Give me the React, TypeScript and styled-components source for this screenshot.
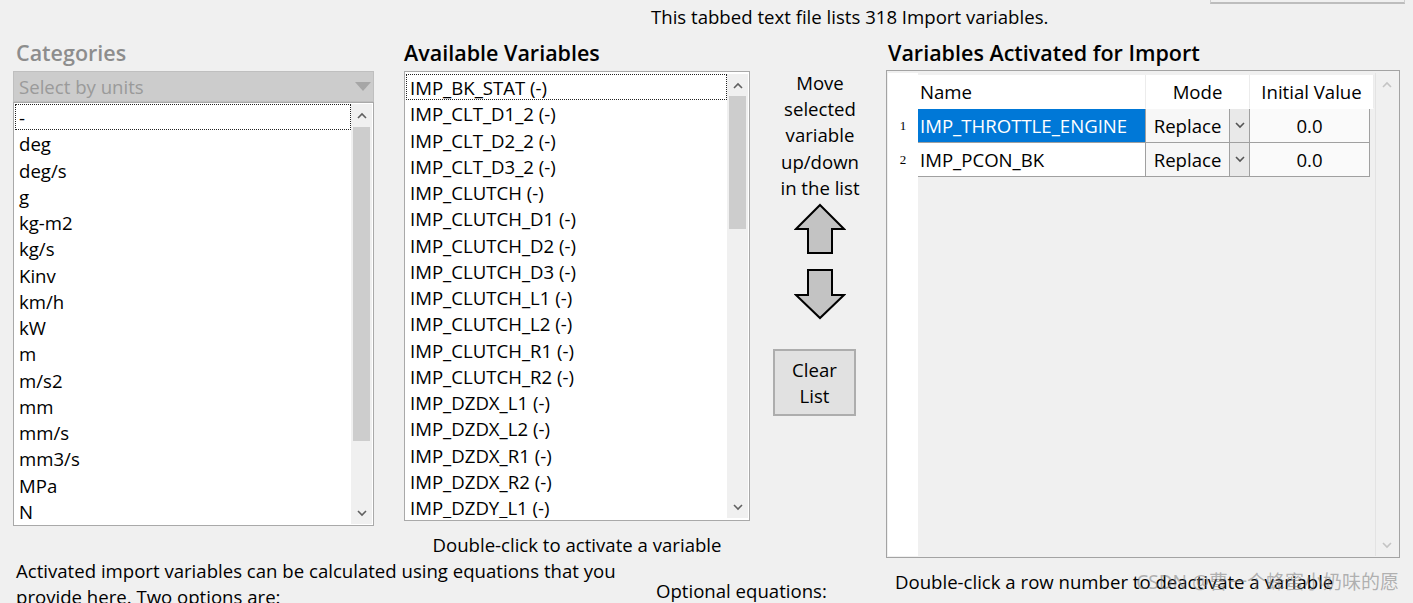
import React from "react";
import styled, { createGlobalStyle } from "styled-components";

const GlobalStyle = createGlobalStyle`
  html, body {
    margin: 0;
    padding: 0;
    background: #f0f0f0;
  }
  body {
    font-family: "Open Sans", "Noto Sans", "Noto Sans CJK SC", sans-serif;
    font-size: 18.6px;
    color: #000;
    overflow: hidden;
  }
`;

const categories = [
  "-", "deg", "deg/s", "g", "kg-m2", "kg/s", "Kinv", "km/h",
  "kW", "m", "m/s2", "mm", "mm/s", "mm3/s", "MPa", "N",
];

const variables = [
  "IMP_BK_STAT (-)", "IMP_CLT_D1_2 (-)", "IMP_CLT_D2_2 (-)", "IMP_CLT_D3_2 (-)",
  "IMP_CLUTCH (-)", "IMP_CLUTCH_D1 (-)", "IMP_CLUTCH_D2 (-)", "IMP_CLUTCH_D3 (-)",
  "IMP_CLUTCH_L1 (-)", "IMP_CLUTCH_L2 (-)", "IMP_CLUTCH_R1 (-)", "IMP_CLUTCH_R2 (-)",
  "IMP_DZDX_L1 (-)", "IMP_DZDX_L2 (-)", "IMP_DZDX_R1 (-)", "IMP_DZDX_R2 (-)",
  "IMP_DZDY_L1 (-)",
];

const activated = [
  { name: "IMP_THROTTLE_ENGINE", mode: "Replace", value: "0.0", selected: true },
  { name: "IMP_PCON_BK", mode: "Replace", value: "0.0", selected: false },
];

const Page = styled.div`
  position: relative;
  width: 1413px;
  height: 603px;
  padding-left: 13px;
  box-sizing: border-box;
`;

const Header = styled.div`
  display: flex;
  height: 40px;
`;

const TopNote = styled.div`
  padding-left: 638px;
  line-height: 34px;
  white-space: nowrap;
`;

const ButtonStub = styled.div`
  margin-left: auto;
  margin-right: 8px;
  width: 193px;
  height: 2px;
  border-bottom: 2px solid #bdbdbd;
  border-left: 1px solid #cfcfcf;
  border-right: 1px solid #cfcfcf;
`;

const Main = styled.div`
  display: flex;
  align-items: flex-start;
`;

const LeftArea = styled.div`
  width: 873px;
  flex-shrink: 0;
  display: flex;
  flex-direction: column;
`;

const ListsRow = styled.div`
  display: flex;
  align-items: flex-start;
`;

const Column = styled.div<{ $width: number; $gap?: number }>`
  width: ${(p) => p.$width}px;
  flex-shrink: 0;
  margin-left: ${(p) => p.$gap ?? 0}px;
  display: flex;
  flex-direction: column;
`;

const Title = styled.div<{ $disabled?: boolean }>`
  font-size: 21.5px;
  font-weight: 600;
  line-height: 26px;
  margin-bottom: 5px;
  padding-left: ${(p) => (p.$disabled ? 3 : 0)}px;
  color: ${(p) => (p.$disabled ? "#8d8d8d" : "#000")};
  white-space: nowrap;
`;

const Combo = styled.div`
  height: 29px;
  display: flex;
  align-items: center;
  background: #cccccc;
  border: 1px solid #bfbfbf;
  padding-left: 5px;
  color: #9a9a9a;
`;

const ComboText = styled.span`
  flex: 1;
`;

const ListBox = styled.div<{ $height: number; $pad: number }>`
  height: ${(p) => p.$height}px;
  box-sizing: border-box;
  display: flex;
  background: #fff;
  border: 1px solid #a9a9a9;
  padding: ${(p) => p.$pad}px 1px;
`;

const Items = styled.div`
  flex: 1;
  overflow: hidden;
`;

const Item = styled.div<{ $focused?: boolean }>`
  height: 26.25px;
  line-height: 25px;
  padding-left: 3px;
  box-sizing: border-box;
  white-space: nowrap;
  border: 1px ${(p) => (p.$focused ? "dotted #222" : "solid transparent")};
`;

const ScrollBar = styled.div`
  width: 21px;
  flex-shrink: 0;
  display: flex;
  flex-direction: column;
  background: #f0f0f0;
`;

const ScrollButton = styled.div<{ $muted?: boolean }>`
  height: 22px;
  display: flex;
  align-items: center;
  justify-content: center;
  color: ${(p) => (p.$muted ? "#c4c4c4" : "#606060")};
`;

const Track = styled.div`
  flex: 1;
  padding: 0 2px;
`;

const Thumb = styled.div<{ $top: number; $height: number }>`
  margin-top: ${(p) => p.$top}px;
  height: ${(p) => p.$height}px;
  background: #cdcdcd;
`;

const Caption = styled.div`
  text-align: center;
  line-height: 26px;
  margin-top: 11px;
`;

const MoveCol = styled.div`
  width: 136px;
  flex-shrink: 0;
  padding-top: 30px;
  padding-left: 4px;
  box-sizing: border-box;
  display: flex;
  flex-direction: column;
  align-items: center;
`;

const MoveText = styled.div`
  text-align: center;
  line-height: 26.2px;
  white-space: nowrap;
`;

const Arrow = styled.svg<{ $top: number }>`
  margin-top: ${(p) => p.$top}px;
  display: block;
`;

const ClearButton = styled.button`
  margin-top: 29px;
  margin-right: 11px;
  width: 83px;
  height: 67px;
  background: #e1e1e1;
  border: 2px solid #adadad;
  font: inherit;
  line-height: 26px;
  color: #000;
  padding: 0;
`;

const EquationsRow = styled.div`
  display: flex;
  align-items: flex-start;
`;

const EquationsText = styled.div`
  width: 630px;
  padding-left: 3px;
  line-height: 26px;
  flex-shrink: 0;
`;

const OptionalLabel = styled.div`
  margin-left: 10px;
  margin-top: 20px;
  line-height: 26px;
  white-space: nowrap;
`;

const RightCol = styled.div`
  width: 514px;
  flex-shrink: 0;
  display: flex;
  flex-direction: column;
`;

const RightTitle = styled(Title)`
  padding-left: 2px;
  margin-bottom: 4px;
`;

const Table = styled.div`
  height: 488px;
  box-sizing: border-box;
  border: 1px solid #a3a3a3;
  padding: 4px 1px 1px 1px;
  display: flex;
  background: #f0f0f0;
`;

const RowHeaders = styled.div`
  width: 30px;
  margin-top: -2px;
  background: #fff;
  padding-top: 36px;
`;

const RowNumber = styled.div`
  height: 34px;
  line-height: 34px;
  text-align: center;
  font-family: "Liberation Serif", serif;
  font-size: 13px;
`;

const Grid = styled.div`
  flex: 1;
  display: flex;
  flex-direction: column;
`;

const GridRow = styled.div<{ $header?: boolean }>`
  display: flex;
  height: 34px;
  flex-shrink: 0;
  background: ${(p) => (p.$header ? "#fff" : "transparent")};
  width: ${(p) => (p.$header ? 456 : 452)}px;
`;

const Cell = styled.div<{
  $width: number;
  $align?: string;
  $bg?: string;
  $selected?: boolean;
  $header?: boolean;
}>`
  width: ${(p) => p.$width}px;
  flex-shrink: 0;
  box-sizing: border-box;
  display: flex;
  align-items: center;
  justify-content: ${(p) => p.$align ?? "flex-start"};
  padding-left: ${(p) => (p.$align ? 0 : 2)}px;
  white-space: nowrap;
  overflow: hidden;
  background: ${(p) => (p.$selected ? "#0078d7" : p.$bg ?? "transparent")};
  color: ${(p) => (p.$selected ? "#fff" : "#000")};
  border-right: 1px solid ${(p) => (p.$header ? "#ececec" : "#a0a0a0")};
  border-bottom: 1px solid ${(p) => (p.$header ? "transparent" : "#a0a0a0")};
`;

const GridScroll = styled(ScrollBar)`
  margin-left: auto;
  margin-top: -2px;
  width: 22px;
  border-left: 1px solid #e3e3e3;
`;

const Footnote = styled.div`
  margin-top: 11px;
  padding-left: 9px;
  line-height: 26px;
  white-space: nowrap;
`;

const Watermark = styled.div`
  position: absolute;
  right: 14px;
  bottom: 8px;
  font-family: "Noto Sans", "Noto Sans CJK SC", sans-serif;
  font-size: 19px;
  color: rgba(120, 120, 120, 0.55);
  white-space: nowrap;
`;

const ChevronUp = ({ color = "currentColor" }: { color?: string }) => (
  <svg width="10" height="7" viewBox="0 0 10 7">
    <polyline points="1,6 5,2 9,6" fill="none" stroke={color} strokeWidth="1.6" />
  </svg>
);

const ChevronDown = ({ color = "currentColor" }: { color?: string }) => (
  <svg width="10" height="7" viewBox="0 0 10 7">
    <polyline points="1,1 5,5 9,1" fill="none" stroke={color} strokeWidth="1.6" />
  </svg>
);

const ComboTriangle = () => (
  <svg width="16" height="10" viewBox="0 0 16 10" style={{ marginRight: 2 }}>
    <polygon points="0,0 16,0 8,9" fill="#a6a6a6" />
  </svg>
);

const UpArrow = () => (
  <Arrow $top={2} width="52" height="52" viewBox="0 0 52 52">
    <polygon
      points="26,2 50,26 38,26 38,50 14,50 14,26 2,26"
      fill="#c3c3c3"
      stroke="#000"
      strokeWidth="2"
      strokeLinejoin="miter"
    />
  </Arrow>
);

const DownArrow = () => (
  <Arrow $top={13} width="52" height="52" viewBox="0 0 52 52">
    <polygon
      points="14,2 38,2 38,27 50,27 26,50 2,27 14,27"
      fill="#c3c3c3"
      stroke="#000"
      strokeWidth="2"
      strokeLinejoin="miter"
    />
  </Arrow>
);

export default function App() {
  return (
    <Page>
      <GlobalStyle />
      <Header>
        <TopNote>This tabbed text file lists 318 Import variables.</TopNote>
        <ButtonStub />
      </Header>
      <Main>
        <LeftArea>
          <ListsRow>
            <Column $width={361}>
              <Title $disabled>Categories</Title>
              <Combo>
                <ComboText>Select by units</ComboText>
                <ComboTriangle />
              </Combo>
              <ListBox $height={424} $pad={1}>
                <Items>
                  {categories.map((c, i) => (
                    <Item key={c} $focused={i === 0}>
                      {c}
                    </Item>
                  ))}
                </Items>
                <ScrollBar>
                  <ScrollButton>
                    <ChevronUp />
                  </ScrollButton>
                  <Track>
                    <Thumb $top={1} $height={314} />
                  </Track>
                  <ScrollButton>
                    <ChevronDown />
                  </ScrollButton>
                </ScrollBar>
              </ListBox>
            </Column>
            <Column $width={346} $gap={30}>
              <Title>Available Variables</Title>
              <ListBox $height={450} $pad={2}>
                <Items>
                  {variables.map((v, i) => (
                    <Item key={v} $focused={i === 0}>
                      {v}
                    </Item>
                  ))}
                </Items>
                <ScrollBar>
                  <ScrollButton>
                    <ChevronUp />
                  </ScrollButton>
                  <Track>
                    <Thumb $top={0} $height={133} />
                  </Track>
                  <ScrollButton>
                    <ChevronDown />
                  </ScrollButton>
                </ScrollBar>
              </ListBox>
              <Caption>Double-click to activate a variable</Caption>
            </Column>
            <MoveCol>
              <MoveText>
                Move
                <br />
                selected
                <br />
                variable
                <br />
                up/down
                <br />
                in the list
              </MoveText>
              <UpArrow />
              <DownArrow />
              <ClearButton>
                Clear
                <br />
                List
              </ClearButton>
            </MoveCol>
          </ListsRow>
          <EquationsRow>
            <EquationsText>
              Activated import variables can be calculated using equations that you
              <br />
              provide here. Two options are:
            </EquationsText>
            <OptionalLabel>Optional equations:</OptionalLabel>
          </EquationsRow>
        </LeftArea>
        <RightCol>
          <RightTitle>Variables Activated for Import</RightTitle>
          <Table>
            <RowHeaders>
              {activated.map((r, i) => (
                <RowNumber key={r.name}>{i + 1}</RowNumber>
              ))}
            </RowHeaders>
            <Grid>
              <GridRow $header>
                <Cell $width={228} $header>
                  Name
                </Cell>
                <Cell $width={104} $align="center" $header>
                  Mode
                </Cell>
                <Cell $width={124} $align="center" $header>
                  Initial Value
                </Cell>
              </GridRow>
              {activated.map((r) => (
                <GridRow key={r.name}>
                  <Cell $width={228} $selected={r.selected} $bg="#fff">
                    {r.name}
                  </Cell>
                  <Cell $width={84} $align="center" $bg="#f7f7f7">
                    {r.mode}
                  </Cell>
                  <Cell $width={20} $align="center" $bg="#e9e9e9">
                    <ChevronDown color="#555" />
                  </Cell>
                  <Cell $width={120} $align="center" $bg="#fafafa">
                    {r.value}
                  </Cell>
                </GridRow>
              ))}
            </Grid>
            <GridScroll>
              <ScrollButton $muted>
                <ChevronUp />
              </ScrollButton>
              <Track />
              <ScrollButton $muted>
                <ChevronDown />
              </ScrollButton>
            </GridScroll>
          </Table>
          <Footnote>Double-click a row number to deactivate a variable</Footnote>
        </RightCol>
      </Main>
      <Watermark>CSDN @曹一个蜂蜜小奶味的愿</Watermark>
    </Page>
  );
}
